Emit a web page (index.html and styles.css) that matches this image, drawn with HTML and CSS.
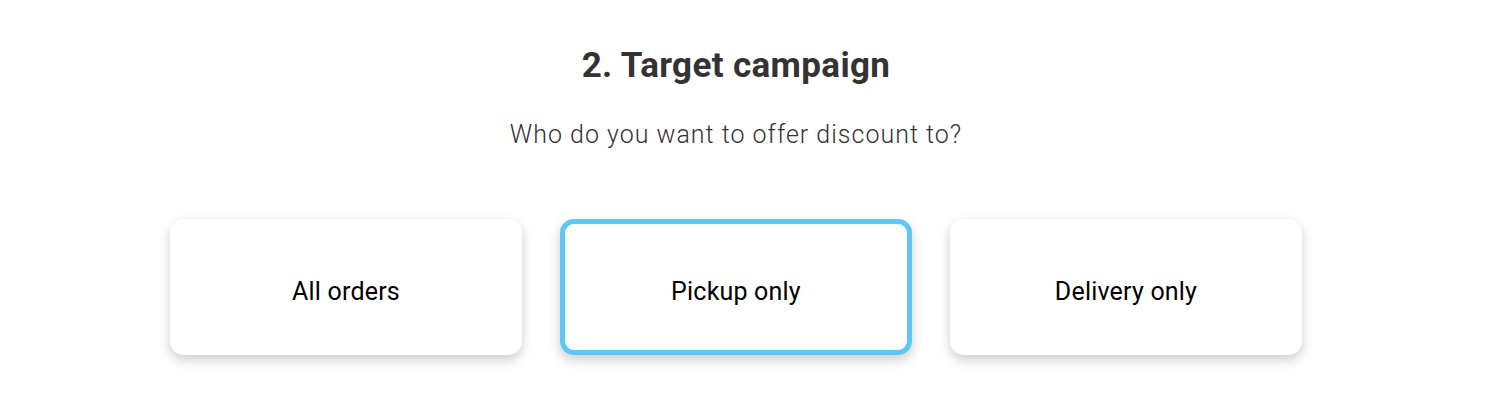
FILE: index.html
```html
<!DOCTYPE html>
<html lang="en">
<head>
  <meta charset="UTF-8">
  <title>Target campaign</title>
  <link rel="stylesheet" href="styles.css">
</head>
<body>
  <section class="step">
    <h2 class="step-title">2. Target campaign</h2>
    <p class="step-subtitle">Who do you want to offer discount to?</p>
    <div class="options">
      <button class="option">All orders</button>
      <button class="option selected">Pickup only</button>
      <button class="option">Delivery only</button>
    </div>
  </section>
</body>
</html>
```

FILE: styles.css
```css
body {
  margin: 0;
  padding: 0 16px 0 0;
  background: #fff;
  font-family: Roboto, "Liberation Sans", sans-serif;
}

.step {
  display: flex;
  flex-direction: column;
  align-items: center;
  padding: 44px 0 40px;
}

.step-title {
  margin: 0;
  font-size: 35px;
  font-weight: 700;
  line-height: 44px;
  letter-spacing: 0.35px;
  color: #333;
}

.step-subtitle {
  margin: 32px 0 0;
  font-size: 25px;
  font-weight: 300;
  line-height: 30px;
  letter-spacing: 1px;
  color: #333;
}

.options {
  display: flex;
  gap: 38px;
  margin-top: 69px;
}

.option {
  width: 352px;
  height: 136px;
  box-sizing: border-box;
  padding: 9px 6px 0;
  border: 5px solid #fff;
  border-radius: 14px;
  background: #fff;
  box-shadow: 0 5px 12px rgba(0, 0, 0, 0.2);
  font-family: inherit;
  font-size: 25px;
  font-weight: 400;
  letter-spacing: 0.2px;
  color: #000;
  cursor: pointer;
}

.option.selected {
  border-color: #5ec8f5;
}
```
